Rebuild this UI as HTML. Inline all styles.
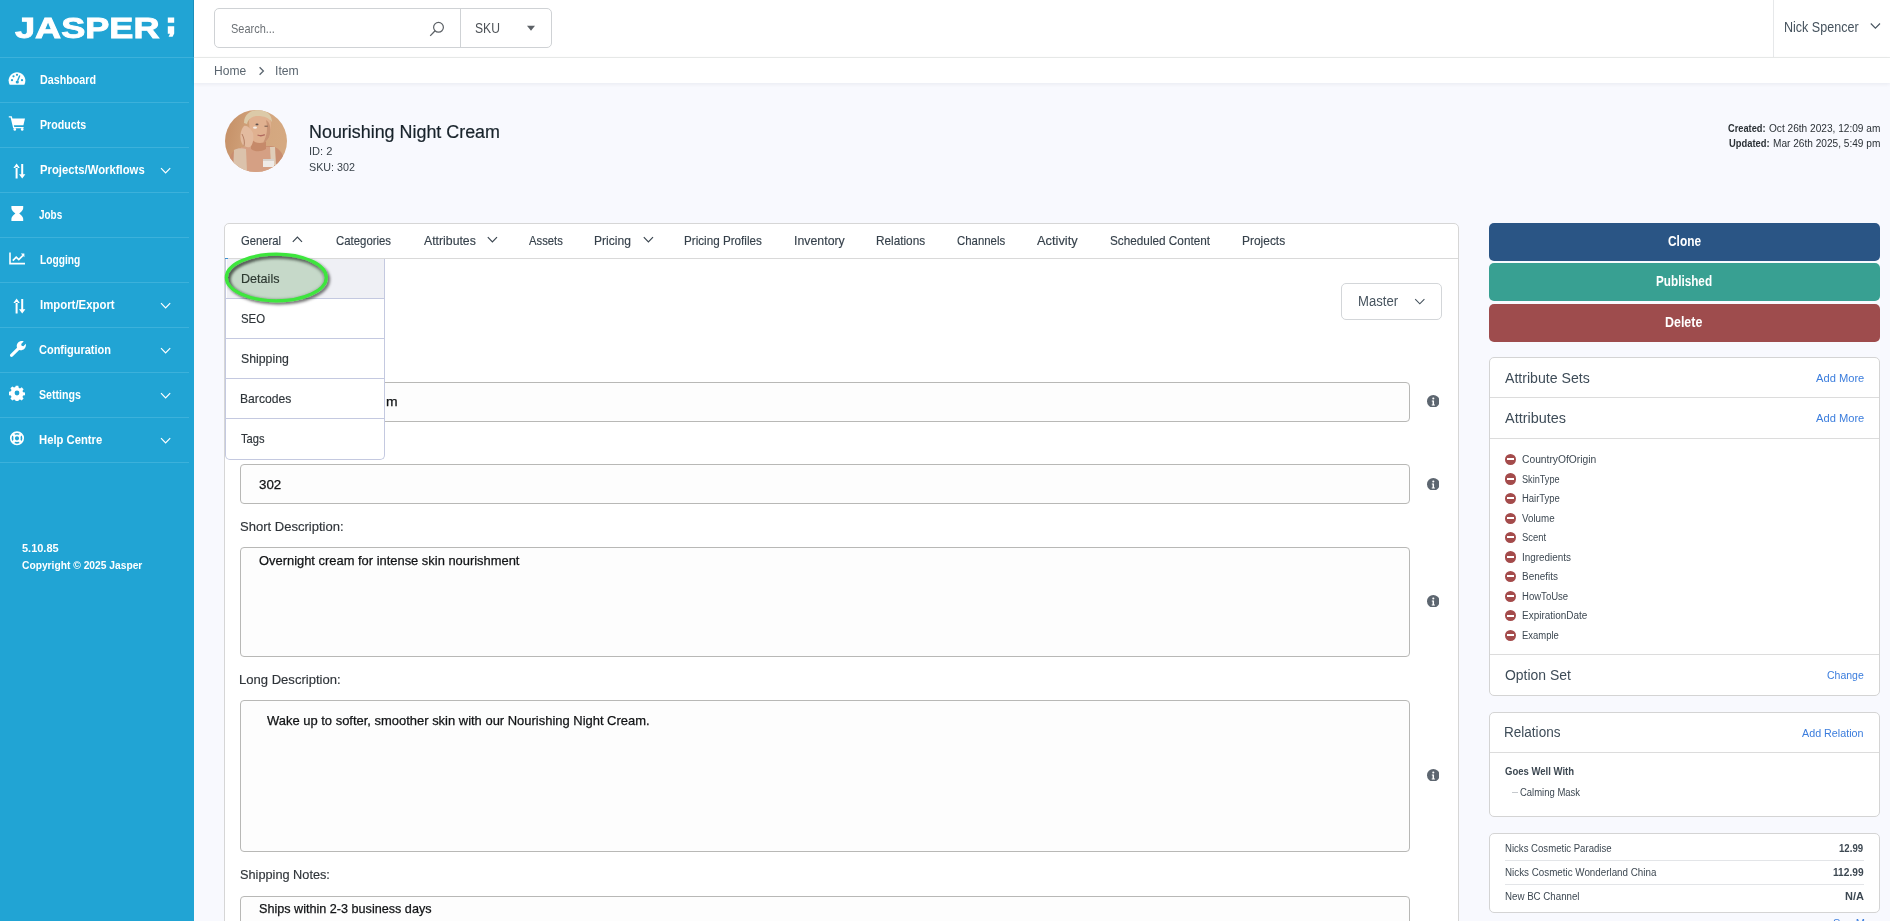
<!DOCTYPE html>
<html><head><meta charset="utf-8">
<style>
*{box-sizing:border-box;margin:0;padding:0}
html,body{width:1890px;height:921px;overflow:hidden;position:relative;font-family:"Liberation Sans",sans-serif;background:#f8f9fe;color:#3b4650}
div,svg{position:absolute}
.w{color:#fff;font-weight:bold;font-size:13px}
.sep{left:0;width:189px;height:1px;background:#3cb1db}
.tab{font-size:13px;color:#36414b;-webkit-text-stroke:0.15px #36414b}
.dd{font-size:13px;color:#2e3439;-webkit-text-stroke:0.15px #2e3439}
.lbl{font-size:13px;color:#2f3439;-webkit-text-stroke:0.15px #2f3439}
.val{font-size:13px;color:#111315;-webkit-text-stroke:0.25px #111315}
.fld{left:240px;width:1170px;border:1px solid #b8b8b6;border-radius:4px;background:#fdfdfd}
.info{left:1426.7px;width:12.6px;height:12.6px}
.btn{left:1489px;width:391px;height:37.5px;border-radius:5px}
.bt{font-size:14px;font-weight:bold;color:#fff}
.card{left:1489px;width:391px;background:#fff;border:1px solid #d4d4d4;border-radius:5px}
.hd{font-size:14px;color:#3e4c58}
.lnk{font-size:11px;color:#3b7ddd}
.at{font-size:10px;color:#3d4852}
.mi{left:1504.8px;width:11.4px;height:11.4px;border-radius:50%;background:#a44b4b}
.mi:after{content:"";position:absolute;left:2.3px;top:4.7px;width:6.8px;height:2px;background:#fff}
.ch{font-size:10px;color:#3d4852}
</style></head><body>
<!-- SIDEBAR -->
<div style="left:0;top:0;width:194px;height:921px;background:#21a4d4"></div>
<div style="left:193px;top:0;width:1px;height:57px;background:#1a8fbc"></div>
<div class="w" style="font-size: 30px; font-weight: bold; -webkit-text-stroke: 0.9px rgb(255, 255, 255); position: absolute; white-space: nowrap; line-height: 36px; top: 9.6px; left: 14.8px; transform: scaleX(1.2037); transform-origin: 0px 0px;">JASPER</div>
<svg style="left:166px;top:16px" width="10" height="24" viewBox="0 0 10 24"><path d="M1.8 1.4h6.4v5.3H1.8z M1.8 10.3h6.4v7.3l-1.6 3.2H2.6l1.4-3H1.8z" fill="#fff"></path></svg>
<div style="left:0;top:57px;width:194px;height:1px;background:#3cb1db"></div>
<div class="sep" style="top:102px"></div>
<div class="sep" style="top:147px"></div>
<div class="sep" style="top:192px"></div>
<div class="sep" style="top:237px"></div>
<div class="sep" style="top:282px"></div>
<div class="sep" style="top:327px"></div>
<div class="sep" style="top:372px"></div>
<div class="sep" style="top:417px"></div>
<div class="sep" style="top:462px"></div>
<div class="w" style="position: absolute; white-space: nowrap; line-height: 16px; top: 72px; left: 39.6px; transform: scaleX(0.8255); transform-origin: 0px 0px;">Dashboard</div>
<div class="w" style="position: absolute; white-space: nowrap; line-height: 16px; top: 117px; left: 39.6px; transform: scaleX(0.818); transform-origin: 0px 0px;">Products</div>
<div class="w" style="position: absolute; white-space: nowrap; line-height: 16px; top: 162px; left: 39.6px; transform: scaleX(0.8696); transform-origin: 0px 0px;">Projects/Workflows</div>
<div class="w" style="position: absolute; white-space: nowrap; line-height: 16px; top: 207px; left: 39.4px; transform: scaleX(0.7638); transform-origin: 0px 0px;">Jobs</div>
<div class="w" style="position: absolute; white-space: nowrap; line-height: 16px; top: 252px; left: 39.6px; transform: scaleX(0.7853); transform-origin: 0px 0px;">Logging</div>
<div class="w" style="position: absolute; white-space: nowrap; line-height: 16px; top: 297px; left: 39.6px; transform: scaleX(0.8755); transform-origin: 0px 0px;">Import/Export</div>
<div class="w" style="position: absolute; white-space: nowrap; line-height: 16px; top: 342px; left: 39.3px; transform: scaleX(0.8444); transform-origin: 0px 0px;">Configuration</div>
<div class="w" style="position: absolute; white-space: nowrap; line-height: 16px; top: 387px; left: 39.2px; transform: scaleX(0.8188); transform-origin: 0px 0px;">Settings</div>
<div class="w" style="position: absolute; white-space: nowrap; line-height: 16px; top: 432px; left: 39.3px; transform: scaleX(0.8662); transform-origin: 0px 0px;">Help Centre</div>
<svg style="left:160px;top:167.3px" width="12" height="8" viewBox="0 0 12 8"><path d="M1 1.2l4.6 4.6 4.6-4.6" fill="none" stroke="#fff" stroke-width="1.2"></path></svg>
<svg style="left:160px;top:302.3px" width="12" height="8" viewBox="0 0 12 8"><path d="M1 1.2l4.6 4.6 4.6-4.6" fill="none" stroke="#fff" stroke-width="1.2"></path></svg>
<svg style="left:160px;top:347.3px" width="12" height="8" viewBox="0 0 12 8"><path d="M1 1.2l4.6 4.6 4.6-4.6" fill="none" stroke="#fff" stroke-width="1.2"></path></svg>
<svg style="left:160px;top:392.3px" width="12" height="8" viewBox="0 0 12 8"><path d="M1 1.2l4.6 4.6 4.6-4.6" fill="none" stroke="#fff" stroke-width="1.2"></path></svg>
<svg style="left:160px;top:437.3px" width="12" height="8" viewBox="0 0 12 8"><path d="M1 1.2l4.6 4.6 4.6-4.6" fill="none" stroke="#fff" stroke-width="1.2"></path></svg>
<!-- icons -->
<svg style="left:8px;top:71px" width="18" height="15" viewBox="0 0 18 15"><path d="M9 1.2C4.4 1.2.6 5 .6 9.6c0 1.5.4 2.9 1.1 4.2h14.6c.7-1.3 1.1-2.7 1.1-4.2C17.4 5 13.6 1.2 9 1.2z" fill="#fff"></path><circle cx="4" cy="9.2" r="1.1" fill="#21a4d4"></circle><circle cx="5.5" cy="5.3" r="1.1" fill="#21a4d4"></circle><circle cx="9" cy="3.8" r="1.1" fill="#21a4d4"></circle><circle cx="14" cy="9.2" r="1.1" fill="#21a4d4"></circle><path d="M11.8 4.6L9.6 9.8" stroke="#21a4d4" stroke-width="1.4"></path><circle cx="9.3" cy="11" r="1.6" fill="#21a4d4"></circle></svg>
<svg style="left:8px;top:115px" width="18" height="16" viewBox="0 0 18 16"><path d="M.8 1.2h3l.6 2.2H17l-1.6 6.8H5.8l.5 1.7h9.3v1.4H5.2L2.6 2.6H.8z" fill="#fff"></path><circle cx="6.8" cy="14.4" r="1.3" fill="#fff"></circle><circle cx="14.2" cy="14.4" r="1.3" fill="#fff"></circle></svg>
<svg style="left:13px;top:163px" width="14" height="17" viewBox="0 0 14 17"><path d="M3.6 .6L.4 5h6.4z M2.6 4h2v11.6h-2z M9.2 15.6L6 11.2h6.4z M8.2 1h2v11h-2z" fill="#fff"></path></svg>
<svg style="left:13px;top:298px" width="14" height="17" viewBox="0 0 14 17"><path d="M3.6 .6L.4 5h6.4z M2.6 4h2v11.6h-2z M9.2 15.6L6 11.2h6.4z M8.2 1h2v11h-2z" fill="#fff"></path></svg>
<svg style="left:11px;top:205px" width="13" height="17" viewBox="0 0 13 17"><path d="M.4 1h11.8v2.2c0 2-2.6 4.2-4 5.3 1.4 1.1 4 3.3 4 5.3V16H.4v-2.2c0-2 2.6-4.2 4-5.3-1.4-1.1-4-3.3-4-5.3z" fill="#fff"></path></svg>
<svg style="left:9px;top:252px" width="17" height="13" viewBox="0 0 17 13"><path d="M1 .6v11h15" fill="none" stroke="#fff" stroke-width="1.6"></path><path d="M3.8 8.6l3.4-3.4 2.6 2.4 4.2-4.2" fill="none" stroke="#fff" stroke-width="1.6"></path><path d="M11.8 1.6h3.6v3.6z" fill="#fff"></path></svg>
<svg style="left:9px;top:340px" width="17" height="17" viewBox="0 0 17 17"><path d="M14.6 1.6l-2.4 2.4.4 1.8 1.8.4 2.4-2.4c.4 1.8-.1 3.6-1.4 4.9-1.4 1.4-3.4 1.8-5.2 1.2l-6.6 6.6c-.6.6-1.6.6-2.2 0s-.6-1.6 0-2.2l6.6-6.6c-.6-1.8-.2-3.8 1.2-5.2 1.3-1.3 3.1-1.8 4.9-1.4z" fill="#fff"></path></svg>
<svg style="left:9px;top:385px" width="16" height="16" viewBox="0 0 16 16"><path d="M6.7.8h2.6l.4 2 1.3.6 1.7-1.1 1.9 1.9-1.1 1.7.6 1.3 2 .4v2.6l-2 .4-.6 1.3 1.1 1.7-1.9 1.9-1.7-1.1-1.3.6-.4 2H6.7l-.4-2-1.3-.6-1.7 1.1-1.9-1.9 1.1-1.7-.6-1.3-2-.4V6.7l2-.4.6-1.3-1.1-1.7 1.9-1.9 1.7 1.1 1.3-.6z" fill="#fff"></path><circle cx="8" cy="8" r="2.4" fill="#21a4d4"></circle></svg>
<svg style="left:9px;top:430px" width="16" height="17" viewBox="0 0 16 17"><circle cx="8" cy="8.3" r="6.2" fill="none" stroke="#fff" stroke-width="1.7"></circle><circle cx="8" cy="8.3" r="2.9" fill="none" stroke="#fff" stroke-width="1.6"></circle><path d="M3.8 4.1l2 2 M12.2 4.1l-2 2 M3.8 12.5l2-2 M12.2 12.5l-2-2" stroke="#fff" stroke-width="2.6"></path></svg>
<div class="w" style="font-size: 11px; position: absolute; white-space: nowrap; line-height: 14px; top: 540.8px; left: 21.5px; transform: scaleX(0.9977); transform-origin: 0px 0px;">5.10.85</div>
<div class="w" style="font-size: 11px; position: absolute; white-space: nowrap; line-height: 14px; top: 557.7px; left: 21.5px; transform: scaleX(0.9317); transform-origin: 0px 0px;">Copyright © 2025 Jasper</div>

<!-- HEADER -->
<div style="left:194px;top:0;width:1696px;height:57px;background:#fff"></div>
<div style="left:194px;top:57px;width:1696px;height:1px;background:#eaeceb"></div>
<div style="left:1773px;top:0;width:1px;height:57px;background:#e6e8ea"></div>
<div style="left:214px;top:8px;width:338px;height:39.5px;border:1px solid #cfd2d5;border-radius:5px;background:#fff"></div>
<div style="left:460px;top:9px;width:1px;height:38px;background:#cfd2d5"></div>
<div style="font-size: 13px; color: rgb(108, 113, 118); position: absolute; white-space: nowrap; line-height: 16px; top: 21.3px; left: 231.1px; transform: scaleX(0.8441); transform-origin: 0px 0px;">Search...</div>
<svg style="left:429px;top:21px" width="16" height="16" viewBox="0 0 16 16"><circle cx="9.5" cy="6.3" r="4.9" fill="none" stroke="#5c6166" stroke-width="1.2"></circle><path d="M6.1 9.8L1.2 14.9" stroke="#5c6166" stroke-width="1.3"></path></svg>
<div style="font-size: 14px; color: rgb(77, 82, 87); position: absolute; white-space: nowrap; line-height: 17px; top: 20.3px; left: 474.5px; transform: scaleX(0.8648); transform-origin: 0px 0px;">SKU</div>
<svg style="left:526px;top:25px" width="10" height="7" viewBox="0 0 10 7"><path d="M1 .8h8L5 5.8z" fill="#5c6166"></path></svg>
<div style="font-size: 14px; color: rgb(70, 83, 94); position: absolute; white-space: nowrap; line-height: 17px; top: 19px; left: 1783.9px; transform: scaleX(0.896); transform-origin: 0px 0px;">Nick Spencer</div>
<svg style="left:1870px;top:22px" width="11" height="9" viewBox="0 0 11 9"><path d="M.8 1.5l4.6 4.6L10 1.5" fill="none" stroke="#46535e" stroke-width="1.1"></path></svg>

<!-- BREADCRUMB -->
<div style="left:194px;top:58px;width:1696px;height:25px;background:#fff;box-shadow:0 1px 4px rgba(20,30,60,0.07)"></div>
<div style="font-size: 13px; color: rgb(91, 102, 112); position: absolute; white-space: nowrap; line-height: 16px; top: 63.2px; left: 213.57px; transform: scaleX(0.9268); transform-origin: 0px 0px;">Home</div>
<svg style="left:258px;top:66px" width="8" height="10" viewBox="0 0 8 10"><path d="M1.6 1.2l3.8 3.8-3.8 3.8" fill="none" stroke="#5b6670" stroke-width="1.3"></path></svg>
<div style="font-size: 13px; color: rgb(91, 102, 112); position: absolute; white-space: nowrap; line-height: 16px; top: 63.2px; left: 274.96px; transform: scaleX(0.938); transform-origin: 0px 0px;">Item</div>

<!-- PRODUCT HEADER -->
<svg style="left:225px;top:110px" width="62" height="62" viewBox="0 0 62 62">
 <defs><clipPath id="cc"><circle cx="31" cy="31" r="31"></circle></clipPath>
 <linearGradient id="bg" x1="0" y1="0" x2="1" y2="0.2"><stop offset="0" stop-color="#c48e65"></stop><stop offset="0.55" stop-color="#d3a67e"></stop><stop offset="1" stop-color="#d5a981"></stop></linearGradient>
 <filter id="bl1" x="-10%" y="-10%" width="120%" height="120%"><feGaussianBlur stdDeviation="0.6"></feGaussianBlur></filter></defs>
 <g clip-path="url(#cc)">
  <rect width="62" height="62" fill="url(#bg)"></rect>
  <g filter="url(#bl1)">
  <path d="M2 62 C3 50 6 40 14 38 L22 37 L46 36 C53 37 58 42 60 52 L62 62z" fill="#c98e70"></path>
  <path d="M16 37 L50 37 L50 62 H16z" fill="#d5a084"></path>
  <path d="M9 40 C12 38 17 38 21 39 L22 62 H8z" fill="#dbc2ab"></path>
  <path d="M45 37 L50 37 L51 55 L46 55z" fill="#e0cdb8"></path>
  <path d="M26 29 L41 29 L41 39 C36 42 30 42 26 39z" fill="#c68a6a"></path>
  <path d="M24 12 C24 6 29 4 35 4 C42 4 46 8 46 14 L45 24 C44 30 40 33 35 33 C30 33 26 30 25 25z" fill="#e0b190"></path>
  <path d="M41 10 C45 12 46 18 45 24 C44 29 41 32 38 33 C42 26 43 18 41 10z" fill="#c99474"></path>
  <path d="M19 13 C19 4 26 0 33 0 C41 0 47 4 47 12 C44 8 39 6 33 6 C27 6 23 9 22 14z" fill="#dccaa8"></path>
  <path d="M19 16 C22 15 26 19 28 23 C29 28 28 35 25 37 C20 38 16 35 15.5 28 C15 23 17 18 19 16z" fill="#e3bb9f"></path>
  <path d="M17 24 C19 28 20 32 19 36" stroke="#b58065" stroke-width="1" fill="none"></path>
  <ellipse cx="30" cy="17.6" rx="2" ry="1.2" fill="#f4eee8"></ellipse>
  <ellipse cx="32" cy="14.4" rx="1.5" ry="0.9" fill="#5e514d"></ellipse>
  <path d="M39.5 16.2 h3.2" stroke="#6e5448" stroke-width="1"></path>
  <path d="M32.5 25 c2 .9 5 .9 7.3-.3" stroke="#b06a5e" stroke-width="1.3" fill="none"></path>
  <path d="M38 49 h11 v8 h-11z" fill="#efebe7"></path>
  <path d="M38 49 h11 v2 h-11z" fill="#d8d2cc"></path>
  </g>
 </g>
</svg>
<div style="font-size: 18px; color: rgb(24, 35, 43); -webkit-text-stroke: 0.2px rgb(24, 35, 43); position: absolute; white-space: nowrap; line-height: 22px; top: 121.1px; left: 308.71px; transform: scaleX(0.9943); transform-origin: 0px 0px;">Nourishing Night Cream</div>
<div style="font-size: 11px; color: rgb(57, 66, 74); position: absolute; white-space: nowrap; line-height: 14px; top: 144px; left: 308.69px; transform: scaleX(1.0085); transform-origin: 0px 0px;">ID: 2</div>
<div style="font-size: 11px; color: rgb(57, 66, 74); position: absolute; white-space: nowrap; line-height: 14px; top: 159.8px; left: 309px; transform: scaleX(0.9752); transform-origin: 0px 0px;">SKU: 302</div>
<div style="font-size: 10px; font-weight: bold; color: rgb(43, 49, 54); position: absolute; white-space: nowrap; line-height: 12px; top: 122.9px; left: 1728.1px; transform: scaleX(0.927); transform-origin: 0px 0px;">Created:</div>
<div style="font-size: 10px; color: rgb(43, 49, 54); position: absolute; white-space: nowrap; line-height: 12px; top: 122.9px; left: 1768.6px; transform: scaleX(1.0115); transform-origin: 0px 0px;">Oct 26th 2023, 12:09 am</div>
<div style="font-size: 10px; font-weight: bold; color: rgb(43, 49, 54); position: absolute; white-space: nowrap; line-height: 12px; top: 137.8px; left: 1729px; transform: scaleX(0.9372); transform-origin: 0px 0px;">Updated:</div>
<div style="font-size: 10px; color: rgb(43, 49, 54); position: absolute; white-space: nowrap; line-height: 12px; top: 137.8px; left: 1772.6px; transform: scaleX(1.0109); transform-origin: 0px 0px;">Mar 26th 2025, 5:49 pm</div>

<!-- TAB CARD -->
<div style="left:224px;top:223px;width:1235px;height:720px;background:#fff;border:1px solid #d6d6d6;border-radius:5px"></div>
<div style="left:225px;top:258px;width:1233px;height:1px;background:#d9d9d9"></div>
<div class="tab" style="position: absolute; white-space: nowrap; line-height: 16px; top: 232.9px; left: 241.2px; transform: scaleX(0.8671); transform-origin: 0px 0px;">General</div>
<svg style="left:292px;top:236px" width="11" height="7" viewBox="0 0 11 7"><path d="M.8 5.8L5.4 1.2 10 5.8" fill="none" stroke="#3b4650" stroke-width="1.2"></path></svg>
<div class="tab" style="position: absolute; white-space: nowrap; line-height: 16px; top: 232.9px; left: 335.6px; transform: scaleX(0.8758); transform-origin: 0px 0px;">Categories</div>
<div class="tab" style="position: absolute; white-space: nowrap; line-height: 16px; top: 232.9px; left: 423.7px; transform: scaleX(0.9438); transform-origin: 0px 0px;">Attributes</div>
<svg style="left:487px;top:236px" width="11" height="7" viewBox="0 0 11 7"><path d="M.8 1.2l4.6 4.6L10 1.2" fill="none" stroke="#3b4650" stroke-width="1.2"></path></svg>
<div class="tab" style="position: absolute; white-space: nowrap; line-height: 16px; top: 232.9px; left: 529px; transform: scaleX(0.8655); transform-origin: 0px 0px;">Assets</div>
<div class="tab" style="position: absolute; white-space: nowrap; line-height: 16px; top: 232.9px; left: 594.47px; transform: scaleX(0.9297); transform-origin: 0px 0px;">Pricing</div>
<svg style="left:643px;top:236px" width="11" height="7" viewBox="0 0 11 7"><path d="M.8 1.2l4.6 4.6L10 1.2" fill="none" stroke="#3b4650" stroke-width="1.2"></path></svg>
<div class="tab" style="position: absolute; white-space: nowrap; line-height: 16px; top: 232.9px; left: 684px; transform: scaleX(0.898); transform-origin: 0px 0px;">Pricing Profiles</div>
<div class="tab" style="position: absolute; white-space: nowrap; line-height: 16px; top: 232.9px; left: 793.55px; transform: scaleX(0.9495); transform-origin: 0px 0px;">Inventory</div>
<div class="tab" style="position: absolute; white-space: nowrap; line-height: 16px; top: 232.9px; left: 875.79px; transform: scaleX(0.9051); transform-origin: 0px 0px;">Relations</div>
<div class="tab" style="position: absolute; white-space: nowrap; line-height: 16px; top: 232.9px; left: 957px; transform: scaleX(0.8768); transform-origin: 0px 0px;">Channels</div>
<div class="tab" style="position: absolute; white-space: nowrap; line-height: 16px; top: 232.9px; left: 1037.4px; transform: scaleX(0.9887); transform-origin: 0px 0px;">Activity</div>
<div class="tab" style="position: absolute; white-space: nowrap; line-height: 16px; top: 232.9px; left: 1110.4px; transform: scaleX(0.9047); transform-origin: 0px 0px;">Scheduled Content</div>
<div class="tab" style="position: absolute; white-space: nowrap; line-height: 16px; top: 232.9px; left: 1242.08px; transform: scaleX(0.9191); transform-origin: 0px 0px;">Projects</div>

<!-- Master select -->
<div style="left:1341px;top:283px;width:101px;height:37px;border:1px solid #d3d6d9;border-radius:5px;background:#fff"></div>
<div style="font-size: 14px; color: rgb(70, 83, 94); position: absolute; white-space: nowrap; line-height: 17px; top: 293px; left: 1357.76px; transform: scaleX(0.9353); transform-origin: 0px 0px;">Master</div>
<svg style="left:1414px;top:298px" width="12" height="8" viewBox="0 0 12 8"><path d="M1.2 1.2l4.6 4.6 4.6-4.6" fill="none" stroke="#46535e" stroke-width="1.1"></path></svg>

<!-- FORM -->
<div class="fld" style="top:382px;height:40px"></div>
<div class="val" style="position: absolute; white-space: nowrap; line-height: 16px; top: 394px; left: 385.5px; transform: scaleX(1.07); transform-origin: 0px 0px;">m</div>
<div class="fld" style="top:464px;height:40px"></div>
<div class="val" style="position: absolute; white-space: nowrap; line-height: 16px; top: 476.7px; left: 259.3px; transform: scaleX(1.0252); transform-origin: 0px 0px;">302</div>
<div class="lbl" style="position: absolute; white-space: nowrap; line-height: 16px; top: 519.1px; left: 240.3px; transform: scaleX(1.0028); transform-origin: 0px 0px;">Short Description:</div>
<div class="fld" style="top:547px;height:110px"></div>
<div class="val" style="position: absolute; white-space: nowrap; line-height: 16px; top: 552.9px; left: 259.3px; transform: scaleX(0.9929); transform-origin: 0px 0px;">Overnight cream for intense skin nourishment</div>
<div class="lbl" style="position: absolute; white-space: nowrap; line-height: 16px; top: 672px; left: 239.3px; transform: scaleX(1.0044); transform-origin: 0px 0px;">Long Description:</div>
<div class="fld" style="top:699.5px;height:152px"></div>
<div class="val" style="position: absolute; white-space: nowrap; line-height: 16px; top: 712.5px; left: 267.2px; transform: scaleX(0.9966); transform-origin: 0px 0px;">Wake up to softer, smoother skin with our Nourishing Night Cream.</div>
<div class="lbl" style="position: absolute; white-space: nowrap; line-height: 16px; top: 867px; left: 240.2px; transform: scaleX(0.9795); transform-origin: 0px 0px;">Shipping Notes:</div>
<div class="fld" style="top:895.5px;height:40px"></div>
<div class="val" style="position: absolute; white-space: nowrap; line-height: 16px; top: 900.7px; left: 259.1px; transform: scaleX(0.9705); transform-origin: 0px 0px;">Ships within 2-3 business days</div>
<svg class="info" style="top:394.9px" viewBox="0 0 12 12"><circle cx="6" cy="6" r="6" fill="#5d6670"></circle><circle cx="6" cy="3.3" r="1" fill="#fff"></circle><path d="M4.6 5.2h2.1v3.8h.8v1.1H4.5V9h.8V6.3h-.7z" fill="#fff"></path></svg>
<svg class="info" style="top:477.7px" viewBox="0 0 12 12"><circle cx="6" cy="6" r="6" fill="#5d6670"></circle><circle cx="6" cy="3.3" r="1" fill="#fff"></circle><path d="M4.6 5.2h2.1v3.8h.8v1.1H4.5V9h.8V6.3h-.7z" fill="#fff"></path></svg>
<svg class="info" style="top:594.7px" viewBox="0 0 12 12"><circle cx="6" cy="6" r="6" fill="#5d6670"></circle><circle cx="6" cy="3.3" r="1" fill="#fff"></circle><path d="M4.6 5.2h2.1v3.8h.8v1.1H4.5V9h.8V6.3h-.7z" fill="#fff"></path></svg>
<svg class="info" style="top:768.7px" viewBox="0 0 12 12"><circle cx="6" cy="6" r="6" fill="#5d6670"></circle><circle cx="6" cy="3.3" r="1" fill="#fff"></circle><path d="M4.6 5.2h2.1v3.8h.8v1.1H4.5V9h.8V6.3h-.7z" fill="#fff"></path></svg>

<!-- DROPDOWN -->
<div style="left:225px;top:258.5px;width:160px;height:201px;background:#fff;border:1px solid #c4c9e0;border-top:none;border-radius:0 0 5px 5px"></div>
<div style="left:226.5px;top:259px;width:157.5px;height:39px;background:#eff0f5"></div>
<div style="left:226px;top:298px;width:158px;height:1px;background:#c4c9e0"></div>
<div style="left:226px;top:338px;width:158px;height:1px;background:#c4c9e0"></div>
<div style="left:226px;top:378px;width:158px;height:1px;background:#c4c9e0"></div>
<div style="left:226px;top:418px;width:158px;height:1px;background:#c4c9e0"></div>
<div style="left:225px;top:258px;width:3px;height:1px;background:#3a8fd0"></div>
<div class="dd" style="position: absolute; white-space: nowrap; line-height: 16px; top: 311px; left: 241.2px; transform: scaleX(0.8778); transform-origin: 0px 0px;">SEO</div>
<div class="dd" style="position: absolute; white-space: nowrap; line-height: 16px; top: 351.3px; left: 241.2px; transform: scaleX(0.9451); transform-origin: 0px 0px;">Shipping</div>
<div class="dd" style="position: absolute; white-space: nowrap; line-height: 16px; top: 391px; left: 240.27px; transform: scaleX(0.9335); transform-origin: 0px 0px;">Barcodes</div>
<div class="dd" style="position: absolute; white-space: nowrap; line-height: 16px; top: 431px; left: 241.2px; transform: scaleX(0.8584); transform-origin: 0px 0px;">Tags</div>
<!-- highlight ellipse -->
<svg style="left:215px;top:245px" width="130" height="70" viewBox="0 0 130 70">
 <defs><filter id="sh" x="-20%" y="-30%" width="140%" height="160%"><feGaussianBlur in="SourceAlpha" stdDeviation="1.6"></feGaussianBlur><feOffset dx="1.5" dy="2" result="b"></feOffset><feFlood flood-color="#000" flood-opacity="0.6"></feFlood><feComposite in2="b" operator="in"></feComposite><feMerge><feMergeNode></feMergeNode><feMergeNode in="SourceGraphic"></feMergeNode></feMerge></filter>
 <filter id="ish"><feGaussianBlur stdDeviation="1.5"></feGaussianBlur></filter></defs>
 <ellipse cx="61.3" cy="32.5" rx="50" ry="23.3" fill="#c6d9c9"></ellipse>
 <ellipse cx="62" cy="34" rx="48" ry="21.5" fill="none" stroke="#5c6b5e" stroke-width="2.5" opacity="0.55" filter="url(#ish)" clip-path="none"></ellipse>
 <ellipse cx="61.3" cy="32.5" rx="50" ry="23.3" fill="none" stroke="#3de63d" stroke-width="3.2" filter="url(#sh)"></ellipse>
</svg>
<div class="dd" style="color: rgb(44, 58, 46); position: absolute; white-space: nowrap; line-height: 16px; top: 270.8px; left: 240.93px; transform: scaleX(0.9685); transform-origin: 0px 0px;">Details</div>

<!-- RIGHT PANEL -->
<div class="btn" style="top:223.2px;background:#2a5585"></div>
<div class="btn" style="top:263.2px;background:#38a092"></div>
<div class="btn" style="top:304px;background:#9e4c4d"></div>
<div class="bt" style="position: absolute; white-space: nowrap; line-height: 17px; top: 232.9px; left: 1667.6px; transform: scaleX(0.849); transform-origin: 0px 0px;">Clone</div>
<div class="bt" style="position: absolute; white-space: nowrap; line-height: 17px; top: 273.4px; left: 1656.1px; transform: scaleX(0.838); transform-origin: 0px 0px;">Published</div>
<div class="bt" style="position: absolute; white-space: nowrap; line-height: 17px; top: 314.2px; left: 1664.75px; transform: scaleX(0.8879); transform-origin: 0px 0px;">Delete</div>

<div class="card" style="top:357px;height:339px"></div>
<div style="left:1490px;top:397px;width:389px;height:1px;background:#dcdcdc"></div>
<div style="left:1490px;top:438px;width:389px;height:1px;background:#dcdcdc"></div>
<div style="left:1490px;top:654px;width:389px;height:1px;background:#dcdcdc"></div>
<div class="hd" style="position: absolute; white-space: nowrap; line-height: 17px; top: 369.8px; left: 1504.5px; transform: scaleX(1.009); transform-origin: 0px 0px;">Attribute Sets</div>
<div class="lnk" style="position: absolute; white-space: nowrap; line-height: 14px; top: 370.7px; left: 1815.6px; transform: scaleX(1.0132); transform-origin: 0px 0px;">Add More</div>
<div class="hd" style="position: absolute; white-space: nowrap; line-height: 17px; top: 410px; left: 1504.5px; transform: scaleX(1.0315); transform-origin: 0px 0px;">Attributes</div>
<div class="lnk" style="position: absolute; white-space: nowrap; line-height: 14px; top: 410.9px; left: 1815.6px; transform: scaleX(1.0132); transform-origin: 0px 0px;">Add More</div>
<div class="mi" style="top:453.8px"></div><div class="at" style="position: absolute; white-space: nowrap; line-height: 12px; top: 454px; left: 1522px; transform: scaleX(1.0281); transform-origin: 0px 0px;">CountryOfOrigin</div>
<div class="mi" style="top:473.4px"></div><div class="at" style="position: absolute; white-space: nowrap; line-height: 12px; top: 473.8px; left: 1522px; transform: scaleX(0.9141); transform-origin: 0px 0px;">SkinType</div>
<div class="mi" style="top:492.8px"></div><div class="at" style="position: absolute; white-space: nowrap; line-height: 12px; top: 493px; left: 1522px; transform: scaleX(0.9468); transform-origin: 0px 0px;">HairType</div>
<div class="mi" style="top:512.6px"></div><div class="at" style="position: absolute; white-space: nowrap; line-height: 12px; top: 513px; left: 1522px; transform: scaleX(0.9765); transform-origin: 0px 0px;">Volume</div>
<div class="mi" style="top:531.8px"></div><div class="at" style="position: absolute; white-space: nowrap; line-height: 12px; top: 532.2px; left: 1522px; transform: scaleX(0.9421); transform-origin: 0px 0px;">Scent</div>
<div class="mi" style="top:551.4px"></div><div class="at" style="position: absolute; white-space: nowrap; line-height: 12px; top: 552px; left: 1522px; transform: scaleX(0.9883); transform-origin: 0px 0px;">Ingredients</div>
<div class="mi" style="top:570.8px"></div><div class="at" style="position: absolute; white-space: nowrap; line-height: 12px; top: 571.3px; left: 1522px; transform: scaleX(0.9936); transform-origin: 0px 0px;">Benefits</div>
<div class="mi" style="top:590.6px"></div><div class="at" style="position: absolute; white-space: nowrap; line-height: 12px; top: 591px; left: 1522px; transform: scaleX(0.9552); transform-origin: 0px 0px;">HowToUse</div>
<div class="mi" style="top:610px"></div><div class="at" style="position: absolute; white-space: nowrap; line-height: 12px; top: 610.3px; left: 1522px; transform: scaleX(0.9965); transform-origin: 0px 0px;">ExpirationDate</div>
<div class="mi" style="top:629.8px"></div><div class="at" style="position: absolute; white-space: nowrap; line-height: 12px; top: 630px; left: 1522px; transform: scaleX(0.9455); transform-origin: 0px 0px;">Example</div>
<div class="hd" style="position: absolute; white-space: nowrap; line-height: 17px; top: 667px; left: 1504.9px; transform: scaleX(0.9961); transform-origin: 0px 0px;">Option Set</div>
<div class="lnk" style="position: absolute; white-space: nowrap; line-height: 14px; top: 668px; left: 1827.4px; transform: scaleX(0.9528); transform-origin: 0px 0px;">Change</div>

<div class="card" style="top:711.6px;height:105px"></div>
<div style="left:1490px;top:752px;width:389px;height:1px;background:#dcdcdc"></div>
<div class="hd" style="position: absolute; white-space: nowrap; line-height: 17px; top: 724px; left: 1504.03px; transform: scaleX(0.9675); transform-origin: 0px 0px;">Relations</div>
<div class="lnk" style="position: absolute; white-space: nowrap; line-height: 14px; top: 725.5px; left: 1802px; transform: scaleX(0.9766); transform-origin: 0px 0px;">Add Relation</div>
<div class="at" style="font-weight: bold; position: absolute; white-space: nowrap; line-height: 12px; top: 765.8px; left: 1505px; transform: scaleX(0.953); transform-origin: 0px 0px;">Goes Well With</div>
<div style="left:1512px;top:792px;width:5.7px;height:1px;background:#c5c9cd"></div>
<div class="at" style="position: absolute; white-space: nowrap; line-height: 12px; top: 787px; left: 1520px; transform: scaleX(0.9479); transform-origin: 0px 0px;">Calming Mask</div>

<div class="card" style="top:832.5px;height:80px"></div>
<div style="left:1504.5px;top:860px;width:359.5px;height:1px;background:#e3e5e8"></div>
<div style="left:1504.5px;top:884px;width:359.5px;height:1px;background:#e3e5e8"></div>
<div class="ch" style="position: absolute; white-space: nowrap; line-height: 12px; top: 843px; left: 1504.5px; transform: scaleX(0.9589); transform-origin: 0px 0px;">Nicks Cosmetic Paradise</div>
<div class="ch" style="font-weight: bold; position: absolute; white-space: nowrap; line-height: 12px; top: 842.9px; left: 1839.1px; transform: scaleX(0.9622); transform-origin: 0px 0px;">12.99</div>
<div class="ch" style="position: absolute; white-space: nowrap; line-height: 12px; top: 867px; left: 1504.5px; transform: scaleX(0.9809); transform-origin: 0px 0px;">Nicks Cosmetic Wonderland China</div>
<div class="ch" style="font-weight: bold; position: absolute; white-space: nowrap; line-height: 12px; top: 867px; left: 1832.6px; transform: scaleX(1.0173); transform-origin: 0px 0px;">112.99</div>
<div class="ch" style="position: absolute; white-space: nowrap; line-height: 12px; top: 891px; left: 1504.5px; transform: scaleX(0.9715); transform-origin: 0px 0px;">New BC Channel</div>
<div class="ch" style="font-weight: bold; position: absolute; white-space: nowrap; line-height: 12px; top: 891px; left: 1844.9px; transform: scaleX(1.1); transform-origin: 0px 0px;">N/A</div>
<div class="lnk" style="position: absolute; white-space: nowrap; line-height: 14px; top: 915.5px; left: 1833px; transform: scaleX(1.009); transform-origin: 0px 0px;">See More</div>

</body></html>
